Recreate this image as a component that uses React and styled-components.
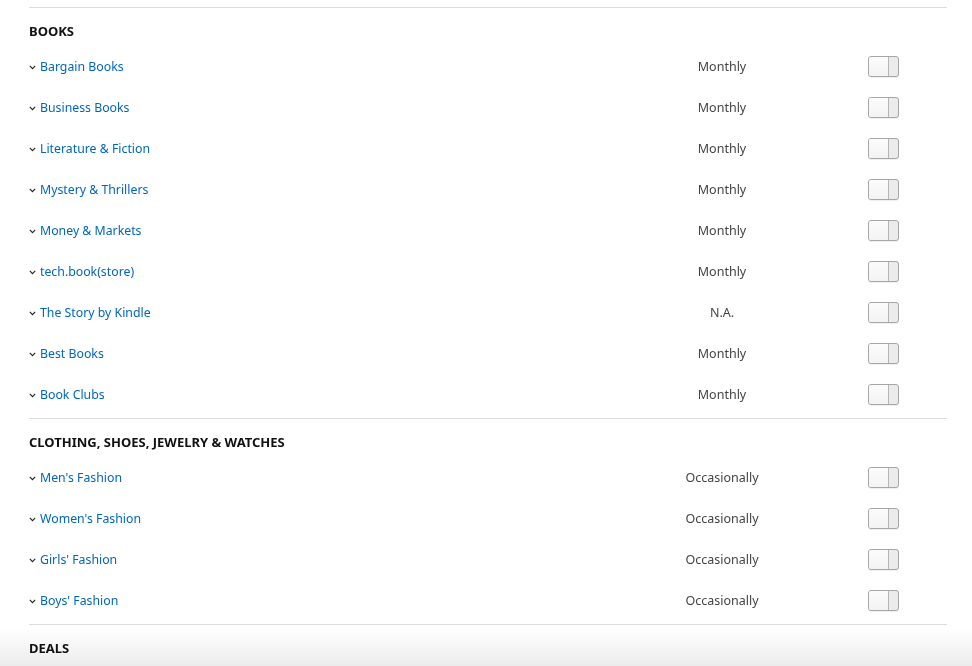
import styled, { createGlobalStyle } from "styled-components";

const GlobalStyle = createGlobalStyle`
  html {
    background: #fff;
  }
  body {
    margin: 0;
    font-family: "Noto Sans", "Open Sans", Arial, sans-serif;
  }
`;

const sections = [
  {
    title: "BOOKS",
    items: [
      ["Bargain Books", "Monthly"],
      ["Business Books", "Monthly"],
      ["Literature & Fiction", "Monthly"],
      ["Mystery & Thrillers", "Monthly"],
      ["Money & Markets", "Monthly"],
      ["tech.book(store)", "Monthly"],
      ["The Story by Kindle", "N.A."],
      ["Best Books", "Monthly"],
      ["Book Clubs", "Monthly"],
    ],
  },
  {
    title: "CLOTHING, SHOES, JEWELRY & WATCHES",
    items: [
      ["Men's Fashion", "Occasionally"],
      ["Women's Fashion", "Occasionally"],
      ["Girls' Fashion", "Occasionally"],
      ["Boys' Fashion", "Occasionally"],
    ],
  },
  { title: "DEALS", items: [] },
];

export default function App() {
  return (
    <>
      <GlobalStyle />
      <BottomFade />
      <PageWrapper>
        {sections.map((section) => (
          <Section key={section.title}>
            <SectionTitle>{section.title}</SectionTitle>
            {section.items.map(([name, freq]) => (
              <Row key={name}>
                <NameLink href="#">
                  <Chevron width="7" height="5" viewBox="0 0 7 5">
                    <polyline
                      points="0.8,0.8 3.5,3.6 6.2,0.8"
                      fill="none"
                      stroke="#222"
                      strokeWidth="1.1"
                    />
                  </Chevron>
                  {name}
                </NameLink>
                <Frequency>{freq}</Frequency>
                <Toggle>
                  <Knob />
                </Toggle>
              </Row>
            ))}
          </Section>
        ))}
      </PageWrapper>
    </>
  );
}

const PageWrapper = styled.main`
  padding: 7px 25px 0 29px;
  height: 659px;
  overflow: hidden;
`;

const Section = styled.section`
  border-top: 1px solid #dddddd;
  padding-top: 13px;
  padding-bottom: 3px;
`;

const SectionTitle = styled.h3`
  margin: 0 0 5px;
  font-size: 13px;
  line-height: 20px;
  font-weight: 700;
  color: #111;
`;

const Row = styled.div`
  display: grid;
  grid-template-columns: 1fr 146px 31px;
  column-gap: 73px;
  align-items: center;
  height: 41px;
  padding-right: 48px;
`;

const NameLink = styled.a`
  display: flex;
  align-items: center;
  gap: 4px;
  font-size: 12.3px;
  color: #0066c0;
  text-decoration: none;
`;

const Chevron = styled.svg`
  display: block;
  margin-top: 1px;
`;

const Frequency = styled.span`
  text-align: center;
  font-size: 12.5px;
  color: #444;
`;

const Toggle = styled.div`
  width: 31px;
  height: 21px;
  box-sizing: border-box;
  border: 1px solid #a6a6a6;
  border-radius: 3px;
  background: #ebebeb;
  box-shadow: 0 1px 0 rgba(0, 0, 0, 0.06);
`;

const Knob = styled.div`
  width: 20px;
  height: 100%;
  box-sizing: border-box;
  border-right: 1px solid #b5b5b5;
  border-radius: 2px 0 0 2px;
  background: linear-gradient(#fcfcfc, #f3f3f3);
`;

const BottomFade = styled.div`
  position: fixed;
  left: 0;
  right: 0;
  bottom: 0;
  height: 38px;
  z-index: -1;
  pointer-events: none;
  background: linear-gradient(rgba(238, 238, 238, 0), rgba(236, 236, 236, 1));
`;
